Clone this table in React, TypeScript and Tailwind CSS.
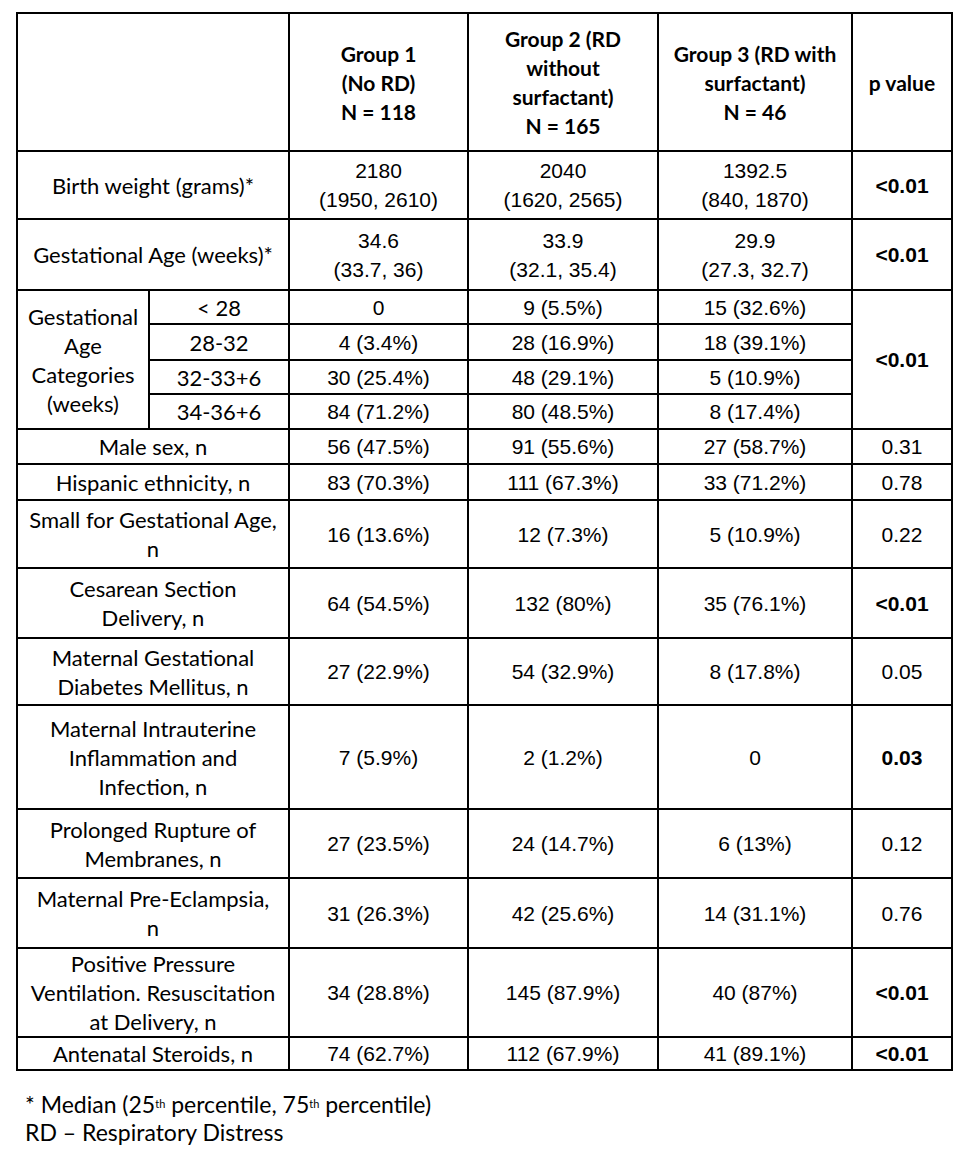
import React from 'react';

type Row = {
  label: string[];
  g1: string[];
  g2: string[];
  g3: string[];
  p: string;
  bold?: boolean;
  h: number;
};

const LABEL_FONT = 'font-["Lato","Noto_Sans",sans-serif]';

const TOP_ROWS: Row[] = [
  { label: ['Birth weight (grams)*'], g1: ['2180', '(1950, 2610)'], g2: ['2040', '(1620, 2565)'], g3: ['1392.5', '(840, 1870)'], p: '<0.01', bold: true, h: 68 },
  { label: ['Gestational Age (weeks)*'], g1: ['34.6', '(33.7, 36)'], g2: ['33.9', '(32.1, 35.4)'], g3: ['29.9', '(27.3, 32.7)'], p: '<0.01', bold: true, h: 71 },
];

const CATEGORIES = [
  { label: '< 28', g1: '0', g2: '9 (5.5%)', g3: '15 (32.6%)', h: 34 },
  { label: '28-32', g1: '4 (3.4%)', g2: '28 (16.9%)', g3: '18 (39.1%)', h: 36 },
  { label: '32-33+6', g1: '30 (25.4%)', g2: '48 (29.1%)', g3: '5 (10.9%)', h: 34 },
  { label: '34-36+6', g1: '84 (71.2%)', g2: '80 (48.5%)', g3: '8 (17.4%)', h: 35 },
];

const ROWS: Row[] = [
  { label: ['Male sex, n'], g1: ['56 (47.5%)'], g2: ['91 (55.6%)'], g3: ['27 (58.7%)'], p: '0.31', h: 35 },
  { label: ['Hispanic ethnicity, n'], g1: ['83 (70.3%)'], g2: ['111 (67.3%)'], g3: ['33 (71.2%)'], p: '0.78', h: 36 },
  { label: ['Small for Gestational Age,', 'n'], g1: ['16 (13.6%)'], g2: ['12 (7.3%)'], g3: ['5 (10.9%)'], p: '0.22', h: 68 },
  { label: ['Cesarean Section', 'Delivery, n'], g1: ['64 (54.5%)'], g2: ['132 (80%)'], g3: ['35 (76.1%)'], p: '<0.01', bold: true, h: 70 },
  { label: ['Maternal Gestational', 'Diabetes Mellitus, n'], g1: ['27 (22.9%)'], g2: ['54 (32.9%)'], g3: ['8 (17.8%)'], p: '0.05', h: 67 },
  { label: ['Maternal Intrauterine', 'Inflammation and', 'Infection, n'], g1: ['7 (5.9%)'], g2: ['2 (1.2%)'], g3: ['0'], p: '0.03', bold: true, h: 104 },
  { label: ['Prolonged Rupture of', 'Membranes, n'], g1: ['27 (23.5%)'], g2: ['24 (14.7%)'], g3: ['6 (13%)'], p: '0.12', h: 69 },
  { label: ['Maternal Pre-Eclampsia,', 'n'], g1: ['31 (26.3%)'], g2: ['42 (25.6%)'], g3: ['14 (31.1%)'], p: '0.76', h: 70 },
  { label: ['Positive Pressure', 'Ventilation. Resuscitation', 'at Delivery, n'], g1: ['34 (28.8%)'], g2: ['145 (87.9%)'], g3: ['40 (87%)'], p: '<0.01', bold: true, h: 88 },
  { label: ['Antenatal Steroids, n'], g1: ['74 (62.7%)'], g2: ['112 (67.9%)'], g3: ['41 (89.1%)'], p: '<0.01', bold: true, h: 33 },
];

const cell = 'border-2 border-black p-0 text-center align-middle';
const dataText = 'font-["Liberation_Sans",Arial,sans-serif] text-[21px] leading-[29px] text-black';
const labelText = `${LABEL_FONT} text-[22px] leading-[29px] text-black`;
const headText = `${LABEL_FONT} text-[21px] leading-[29px] font-bold text-black`;

function Lines({ lines }: { lines: string[] }) {
  return (
    <>
      {lines.map((l, i) => (
        <div key={i} className="whitespace-nowrap">{l}</div>
      ))}
    </>
  );
}

function DataRow({ row }: { row: Row }) {
  return (
    <tr style={{ height: row.h }}>
      <td colSpan={2} className={`${cell} ${labelText}`}><Lines lines={row.label} /></td>
      <td className={`${cell} ${dataText}`}><Lines lines={row.g1} /></td>
      <td className={`${cell} ${dataText}`}><Lines lines={row.g2} /></td>
      <td className={`${cell} ${dataText}`}><Lines lines={row.g3} /></td>
      <td className={`${cell} ${dataText} ${row.bold ? 'font-bold' : ''}`}>{row.p}</td>
    </tr>
  );
}

export default function App() {
  return (
    <div className="w-[972px] h-[1168px] bg-white pt-[12px] pl-[16px]">
      <table className="table-fixed border-collapse w-[937px]">
        <colgroup>
          <col className="w-[132px]" />
          <col className="w-[140px]" />
          <col className="w-[179px]" />
          <col className="w-[190px]" />
          <col className="w-[194px]" />
          <col className="w-[100px]" />
        </colgroup>
        <thead>
          <tr className="h-[138px]">
            <th colSpan={2} className={cell}></th>
            <th className={`${cell} ${headText}`}>
              <Lines lines={['Group 1', '(No RD)', 'N = 118']} />
            </th>
            <th className={`${cell} ${headText}`}>
              <Lines lines={['Group 2 (RD', 'without', 'surfactant)', 'N = 165']} />
            </th>
            <th className={`${cell} ${headText}`}>
              <Lines lines={['Group 3 (RD with', 'surfactant)', 'N = 46']} />
            </th>
            <th className={`${cell} ${headText}`}>p value</th>
          </tr>
        </thead>
        <tbody>
          {TOP_ROWS.map((r, i) => (
            <DataRow key={i} row={r} />
          ))}
          {CATEGORIES.map((c, i) => (
            <tr key={c.label} style={{ height: c.h }}>
              {i === 0 && (
                <td rowSpan={4} className={`${cell} ${labelText}`}>
                  <Lines lines={['Gestational', 'Age', 'Categories', '(weeks)']} />
                </td>
              )}
              <td className={`${cell} ${labelText}`}>{c.label}</td>
              <td className={`${cell} ${dataText}`}>{c.g1}</td>
              <td className={`${cell} ${dataText}`}>{c.g2}</td>
              <td className={`${cell} ${dataText}`}>{c.g3}</td>
              {i === 0 && (
                <td rowSpan={4} className={`${cell} ${dataText} font-bold`}>&lt;0.01</td>
              )}
            </tr>
          ))}
          {ROWS.map((r, i) => (
            <DataRow key={i} row={r} />
          ))}
        </tbody>
      </table>

      <div className={`${LABEL_FONT} text-[23px] leading-[28px] text-black mt-[19px] pl-[9px]`}>
        <div>
          * Median (25<sup className="text-[11px]">th</sup> percentile, 75<sup className="text-[11px]">th</sup> percentile)
        </div>
        <div>RD – Respiratory Distress</div>
      </div>
    </div>
  );
}
